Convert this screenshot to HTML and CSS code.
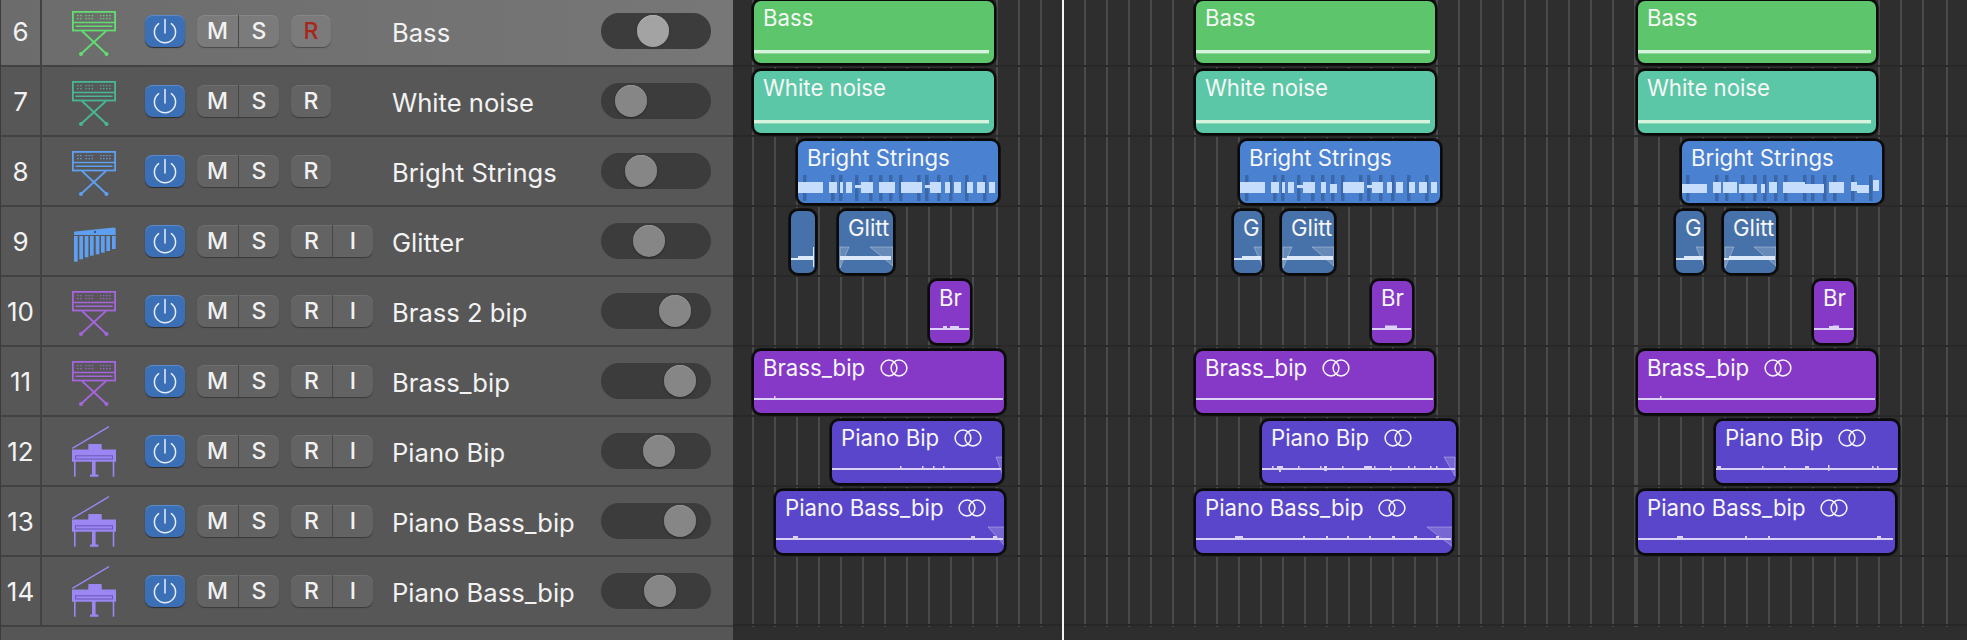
FILE: index.html
```html
<!DOCTYPE html>
<html>
<head>
    <meta charset="UTF-8">
    <title>Tracks</title>
    <link rel="stylesheet" href="styles.css">
</head>

<body>
    <!-- shared icons -->
    <svg class="defs" width="0" height="0">
        <symbol id="icon-keyboard" viewBox="0 -6 44 52">
            <g fill="none" stroke="currentColor">
                <rect x="0.9" y="0.9" width="42.2" height="18.6" stroke-width="1.8"/>
                <path d="M0.8 11.5H43.2" stroke-width="1.6"/>
                <path d="M3.5 15.3H40.5" stroke-width="1.5"/>
                <path d="M10 20L34.5 43M34 20L9 43" stroke-width="1.8"/>
                <path d="M5 4.7H10M13.5 4.7H22M28 4.7H40M5 7.7H10M13.5 7.7H22M28 7.7H40" stroke-width="1.3" stroke-dasharray="1.6 1.4" opacity=".85"/>
            </g>
            <circle cx="9" cy="43" r="2" fill="currentColor"/>
            <circle cx="34.5" cy="43" r="2" fill="currentColor"/>
        </symbol>
        <symbol id="icon-chimes" viewBox="0 -6 44 52">
            <g fill="currentColor">
                <path d="M2 14V11.5Q2 10.7 3 10.6L42 6.4Q43.6 6.3 43.7 8V14Z"/>
                <rect x="2" y="15" width="3.7" height="25.7"/>
                <rect x="7.3" y="15" width="3.7" height="23.3"/>
                <rect x="12.7" y="15" width="3.7" height="21.3"/>
                <rect x="18" y="15" width="3.7" height="19.7"/>
                <rect x="23.7" y="15" width="3.7" height="18.3"/>
                <rect x="29" y="15" width="3.7" height="16.7"/>
                <rect x="34.3" y="15" width="3.7" height="15"/>
                <rect x="40" y="15" width="3.7" height="13"/>
            </g>
            <circle cx="23" cy="11" r="1.2" fill="#3b5b8a"/>
        </symbol>
        <symbol id="icon-piano" viewBox="0 -6 44 52">
            <g fill="currentColor">
                <path d="M16.3 18.5V13.5Q16.3 13 17 13H29Q29.7 13 29.7 13.5V18.5H44V30.7H0V18.5Z"/>
                <rect x="2" y="30" width="1.6" height="15.7"/>
                <rect x="40.7" y="30" width="1.6" height="15.7"/>
                <path d="M20 30H23.6V43.6H26.4V45.8H18V43.6H20Z"/>
            </g>
            <path d="M0.3 17.5L37 -4.3" fill="none" stroke="currentColor" stroke-width="1.4"/>
            <rect x="3.5" y="24.8" width="37" height="3.2" fill="none" stroke="#6a59b8" stroke-width="1"/>
        </symbol>
        <symbol id="icon-power" viewBox="0 0 40 32">
            <path d="M13.6 8.6A10.6 10.6 0 1 0 26.4 8.6M20 4.5V18" fill="none" stroke="currentColor" stroke-width="1.5" stroke-linecap="round"/>
        </symbol>
        <symbol id="icon-loop" viewBox="0 0 28 18">
            <circle cx="9" cy="9" r="7.9" fill="none" stroke="currentColor" stroke-width="1.5"/>
            <circle cx="19" cy="9" r="7.9" fill="none" stroke="currentColor" stroke-width="1.5"/>
        </symbol>
    </svg>

    <div class="page">
        <div class="tracklist">
            <div class="track track-active">
                <div class="track-num">6</div>
                <svg class="track-icon c-green"><use href="#icon-keyboard"/></svg>
                <button class="power"><svg><use href="#icon-power"/></svg></button>
                <div class="btn-group"><span class="btn">M</span><span class="btn">S</span></div>
                <div class="rec-slot"><div class="btn-group"><span class="btn rec-on">R</span></div></div>
                <div class="track-name">Bass</div>
                <div class="fader"><span class="knob" style="margin-left:36px"></span></div>
            </div>
            <div class="track">
                <div class="track-num">7</div>
                <svg class="track-icon c-teal"><use href="#icon-keyboard"/></svg>
                <button class="power"><svg><use href="#icon-power"/></svg></button>
                <div class="btn-group"><span class="btn">M</span><span class="btn">S</span></div>
                <div class="rec-slot"><div class="btn-group"><span class="btn">R</span></div></div>
                <div class="track-name">White noise</div>
                <div class="fader"><span class="knob" style="margin-left:14px"></span></div>
            </div>
            <div class="track">
                <div class="track-num">8</div>
                <svg class="track-icon c-blue"><use href="#icon-keyboard"/></svg>
                <button class="power"><svg><use href="#icon-power"/></svg></button>
                <div class="btn-group"><span class="btn">M</span><span class="btn">S</span></div>
                <div class="rec-slot"><div class="btn-group"><span class="btn">R</span></div></div>
                <div class="track-name">Bright Strings</div>
                <div class="fader"><span class="knob" style="margin-left:24px"></span></div>
            </div>
            <div class="track">
                <div class="track-num">9</div>
                <svg class="track-icon c-blue"><use href="#icon-chimes"/></svg>
                <button class="power"><svg><use href="#icon-power"/></svg></button>
                <div class="btn-group"><span class="btn">M</span><span class="btn">S</span></div>
                <div class="rec-slot"><div class="btn-group"><span class="btn">R</span><span class="btn">I</span></div></div>
                <div class="track-name">Glitter</div>
                <div class="fader"><span class="knob" style="margin-left:32px"></span></div>
            </div>
            <div class="track">
                <div class="track-num">10</div>
                <svg class="track-icon c-purple"><use href="#icon-keyboard"/></svg>
                <button class="power"><svg><use href="#icon-power"/></svg></button>
                <div class="btn-group"><span class="btn">M</span><span class="btn">S</span></div>
                <div class="rec-slot"><div class="btn-group"><span class="btn">R</span><span class="btn">I</span></div></div>
                <div class="track-name">Brass 2 bip</div>
                <div class="fader"><span class="knob" style="margin-left:58px"></span></div>
            </div>
            <div class="track">
                <div class="track-num">11</div>
                <svg class="track-icon c-purple"><use href="#icon-keyboard"/></svg>
                <button class="power"><svg><use href="#icon-power"/></svg></button>
                <div class="btn-group"><span class="btn">M</span><span class="btn">S</span></div>
                <div class="rec-slot"><div class="btn-group"><span class="btn">R</span><span class="btn">I</span></div></div>
                <div class="track-name">Brass_bip</div>
                <div class="fader"><span class="knob" style="margin-left:63px"></span></div>
            </div>
            <div class="track">
                <div class="track-num">12</div>
                <svg class="track-icon c-indigo"><use href="#icon-piano"/></svg>
                <button class="power"><svg><use href="#icon-power"/></svg></button>
                <div class="btn-group"><span class="btn">M</span><span class="btn">S</span></div>
                <div class="rec-slot"><div class="btn-group"><span class="btn">R</span><span class="btn">I</span></div></div>
                <div class="track-name">Piano Bip</div>
                <div class="fader"><span class="knob" style="margin-left:42px"></span></div>
            </div>
            <div class="track">
                <div class="track-num">13</div>
                <svg class="track-icon c-indigo"><use href="#icon-piano"/></svg>
                <button class="power"><svg><use href="#icon-power"/></svg></button>
                <div class="btn-group"><span class="btn">M</span><span class="btn">S</span></div>
                <div class="rec-slot"><div class="btn-group"><span class="btn">R</span><span class="btn">I</span></div></div>
                <div class="track-name">Piano Bass_bip</div>
                <div class="fader"><span class="knob" style="margin-left:63px"></span></div>
            </div>
            <div class="track">
                <div class="track-num">14</div>
                <svg class="track-icon c-indigo"><use href="#icon-piano"/></svg>
                <button class="power"><svg><use href="#icon-power"/></svg></button>
                <div class="btn-group"><span class="btn">M</span><span class="btn">S</span></div>
                <div class="rec-slot"><div class="btn-group"><span class="btn">R</span><span class="btn">I</span></div></div>
                <div class="track-name">Piano Bass_bip</div>
                <div class="fader"><span class="knob" style="margin-left:43px"></span></div>
            </div>
        </div>

        <div class="arrange">
            <div class="lanes">
                <div class="lane">
                    <div class="region r-green" style="left:19px;width:244px"><div class="region-name">Bass</div><svg class="notes"><rect class="n-line" x="-1" y="15" width="236" height="3.4"/></svg></div>
                    <div class="region r-green" style="left:461px;width:243px"><div class="region-name">Bass</div><svg class="notes"><rect class="n-line" x="-1" y="15" width="235" height="3.4"/></svg></div>
                    <div class="region r-green" style="left:903px;width:242px"><div class="region-name">Bass</div><svg class="notes"><rect class="n-line" x="-1" y="15" width="234" height="3.4"/></svg></div>
                </div>
                <div class="lane">
                    <div class="region r-teal" style="left:19px;width:244px"><div class="region-name">White noise</div><svg class="notes"><rect class="n-line" x="-1" y="15" width="236" height="3.4"/></svg></div>
                    <div class="region r-teal" style="left:461px;width:243px"><div class="region-name">White noise</div><svg class="notes"><rect class="n-line" x="-1" y="15" width="235" height="3.4"/></svg></div>
                    <div class="region r-teal" style="left:903px;width:242px"><div class="region-name">White noise</div><svg class="notes"><rect class="n-line" x="-1" y="15" width="234" height="3.4"/></svg></div>
                </div>
                <div class="lane">
                    <div class="region r-blue" style="left:63px;width:204px"><div class="region-name">Bright Strings</div>
                        <svg class="notes">
                            <g class="n-tick"><rect x="5" y="0" width="3.5" height="26"/><rect x="33" y="0" width="3.5" height="26"/><rect x="41" y="0" width="3.5" height="26"/><rect x="57" y="0" width="3.5" height="26"/><rect x="71" y="0" width="3.5" height="26"/><rect x="81" y="0" width="3.5" height="26"/><rect x="91" y="0" width="3.5" height="26"/><rect x="101" y="0" width="3.5" height="26"/><rect x="119" y="0" width="3.5" height="26"/><rect x="127" y="0" width="3.5" height="26"/><rect x="139" y="0" width="3.5" height="26"/><rect x="151" y="0" width="3.5" height="26"/><rect x="167" y="0" width="3.5" height="26"/><rect x="185" y="0" width="3.5" height="26"/></g>
                            <g class="n-block"><rect x="-1" y="7" width="26" height="11"/><rect x="31" y="7" width="8" height="11"/><rect x="42" y="7" width="3" height="11"/><rect x="48" y="7" width="6" height="11"/><rect x="57" y="10" width="6" height="3"/><rect x="63" y="7" width="12" height="11"/><rect x="81" y="7" width="16" height="11"/><rect x="103" y="7" width="21" height="11"/><rect x="127" y="10" width="5" height="3"/><rect x="132" y="7" width="11" height="11"/><rect x="147" y="7" width="5" height="11"/><rect x="156" y="7" width="7" height="11"/><rect x="169" y="7" width="6" height="11"/><rect x="179" y="7" width="8" height="11"/><rect x="191" y="7" width="6" height="11"/></g>
                        </svg>
                    </div>
                    <div class="region r-blue" style="left:505px;width:204px"><div class="region-name">Bright Strings</div>
                        <svg class="notes">
                            <g class="n-tick"><rect x="5" y="0" width="3.5" height="26"/><rect x="33" y="0" width="3.5" height="26"/><rect x="41" y="0" width="3.5" height="26"/><rect x="57" y="0" width="3.5" height="26"/><rect x="71" y="0" width="3.5" height="26"/><rect x="81" y="0" width="3.5" height="26"/><rect x="91" y="0" width="3.5" height="26"/><rect x="101" y="0" width="3.5" height="26"/><rect x="119" y="0" width="3.5" height="26"/><rect x="127" y="0" width="3.5" height="26"/><rect x="139" y="0" width="3.5" height="26"/><rect x="151" y="0" width="3.5" height="26"/><rect x="167" y="0" width="3.5" height="26"/><rect x="185" y="0" width="3.5" height="26"/></g>
                            <g class="n-block"><rect x="-1" y="7" width="26" height="11"/><rect x="31" y="7" width="8" height="11"/><rect x="42" y="7" width="3" height="11"/><rect x="48" y="7" width="6" height="11"/><rect x="57" y="10" width="6" height="3"/><rect x="63" y="7" width="12" height="11"/><rect x="81" y="7" width="5" height="11"/><rect x="90" y="9" width="7" height="9"/><rect x="103" y="7" width="21" height="11"/><rect x="127" y="10" width="5" height="3"/><rect x="132" y="7" width="11" height="11"/><rect x="147" y="7" width="5" height="11"/><rect x="156" y="7" width="7" height="11"/><rect x="169" y="7" width="6" height="11"/><rect x="179" y="7" width="8" height="11"/><rect x="191" y="7" width="6" height="11"/></g>
                        </svg>
                    </div>
                    <div class="region r-blue" style="left:947px;width:204px"><div class="region-name">Bright Strings</div>
                        <svg class="notes">
                            <g class="n-tick"><rect x="4" y="0" width="3.5" height="26"/><rect x="33" y="0" width="3.5" height="26"/><rect x="43" y="0" width="3.5" height="26"/><rect x="59" y="0" width="3.5" height="26"/><rect x="71" y="0" width="3.5" height="26"/><rect x="81" y="0" width="3.5" height="26"/><rect x="92" y="0" width="3.5" height="26"/><rect x="102" y="0" width="3.5" height="26"/><rect x="121" y="0" width="3.5" height="26"/><rect x="129" y="0" width="3.5" height="26"/><rect x="141" y="0" width="3.5" height="26"/><rect x="151" y="0" width="3.5" height="26"/><rect x="169" y="0" width="3.5" height="26"/><rect x="187" y="0" width="3.5" height="26"/></g>
                            <g class="n-block"><rect x="-1" y="9" width="26" height="9"/><rect x="31" y="7" width="8" height="11"/><rect x="41" y="7" width="14" height="11"/><rect x="57" y="9" width="18" height="9"/><rect x="79" y="9" width="4" height="9"/><rect x="87" y="7" width="8" height="11"/><rect x="101" y="7" width="22" height="11"/><rect x="123" y="9" width="19" height="9"/><rect x="147" y="7" width="15" height="11"/><rect x="169" y="7" width="6" height="9"/><rect x="175" y="10" width="12" height="8"/><rect x="191" y="5" width="6" height="11"/></g>
                        </svg>
                    </div>
                </div>
                <div class="lane">
                    <div class="region r-steel" style="left:56px;width:28px"><div class="region-name">&nbsp;</div><svg class="notes"><rect class="n-line" x="-1" y="13" width="8" height="2"/><rect class="n-line" x="7" y="11" width="15" height="4"/><rect class="n-line" x="22" y="2" width="1" height="20"/></svg></div>
                    <div class="region r-steel" style="left:104px;width:58px"><div class="region-name">Glitt</div><svg class="notes"><path class="n-fade" d="M1 2H10L1 23Z"/><path class="n-fade" d="M31 2H54V21Z"/><rect class="n-line" x="1" y="11" width="51" height="4"/></svg></div>
                    <div class="region r-steel" style="left:499px;width:32px"><div class="region-name">G</div><svg class="notes"><path class="n-fade" d="M20 2H29V22Z"/><rect class="n-line" x="-1" y="13" width="9" height="2"/><rect class="n-line" x="8" y="11" width="19" height="4"/></svg></div>
                    <div class="region r-steel" style="left:547px;width:56px"><div class="region-name">Glitt</div><svg class="notes"><path class="n-fade" d="M1 2H10L1 23Z"/><path class="n-fade" d="M30 2H52V21Z"/><rect class="n-line" x="0" y="13" width="5" height="2"/><rect class="n-line" x="5" y="11" width="46" height="4"/></svg></div>
                    <div class="region r-steel" style="left:941px;width:32px"><div class="region-name">G</div><svg class="notes"><path class="n-fade" d="M20 2H29V22Z"/><rect class="n-line" x="-1" y="13" width="9" height="2"/><rect class="n-line" x="8" y="11" width="19" height="4"/></svg></div>
                    <div class="region r-steel" style="left:989px;width:56px"><div class="region-name">Glitt</div><svg class="notes"><path class="n-fade" d="M1 2H10L1 23Z"/><path class="n-fade" d="M30 2H52V21Z"/><rect class="n-line" x="0" y="13" width="5" height="2"/><rect class="n-line" x="5" y="11" width="46" height="4"/></svg></div>
                </div>
                <div class="lane">
                    <div class="region r-purple" style="left:195px;width:44px"><div class="region-name">Br</div><svg class="notes"><rect class="n-thin" x="-1" y="13" width="40" height="2"/><rect class="n-thin" x="13" y="11" width="4" height="2"/><rect class="n-thin" x="20" y="11" width="9" height="2"/></svg></div>
                    <div class="region r-purple" style="left:637px;width:44px"><div class="region-name">Br</div><svg class="notes"><rect class="n-thin" x="-1" y="13" width="40" height="2"/><rect class="n-thin" x="13" y="10.5" width="12" height="3"/></svg></div>
                    <div class="region r-purple" style="left:1079px;width:44px"><div class="region-name">Br</div><svg class="notes"><rect class="n-thin" x="-1" y="13" width="40" height="2"/><rect class="n-thin" x="15" y="11" width="4" height="2"/><rect class="n-thin" x="19" y="10.5" width="6" height="3"/></svg></div>
                </div>
                <div class="lane">
                    <div class="region r-purple" style="left:19px;width:254px"><div class="region-name">Brass_bip<svg class="loop"><use href="#icon-loop"/></svg></div><svg class="notes"><rect class="n-thin" x="-1" y="13" width="250" height="2"/><rect class="n-thin" x="20" y="11" width="1.5" height="2"/></svg></div>
                    <div class="region r-purple" style="left:461px;width:242px"><div class="region-name">Brass_bip<svg class="loop"><use href="#icon-loop"/></svg></div><svg class="notes"><rect class="n-thin" x="-1" y="13" width="238" height="2"/></svg></div>
                    <div class="region r-purple" style="left:903px;width:242px"><div class="region-name">Brass_bip<svg class="loop"><use href="#icon-loop"/></svg></div><svg class="notes"><rect class="n-thin" x="-1" y="13" width="238" height="2"/><rect class="n-thin" x="22" y="11" width="1.5" height="2"/></svg></div>
                </div>
                <div class="lane">
                    <div class="region r-indigo" style="left:97px;width:174px"><div class="region-name">Piano Bip<svg class="loop"><use href="#icon-loop"/></svg></div><svg class="notes"><path class="n-fade" d="M164 2H171V21Z"/><rect class="n-thin" x="-1" y="13" width="170" height="2"/><rect class="n-thin" x="68" y="11" width="1.5" height="2"/><rect class="n-thin" x="90" y="11" width="1.5" height="2"/><rect class="n-thin" x="101" y="11" width="1.5" height="2"/><rect class="n-thin" x="111" y="11" width="1.5" height="2"/></svg></div>
                    <div class="region r-indigo" style="left:527px;width:198px"><div class="region-name">Piano Bip<svg class="loop"><use href="#icon-loop"/></svg></div><svg class="notes"><path class="n-fade" d="M182 2H193V21Z"/><rect class="n-thin" x="-1" y="13" width="194" height="2"/><rect class="n-thin" x="10" y="11" width="1.5" height="2"/><rect class="n-thin" x="15" y="11" width="6" height="2"/><rect class="n-thin" x="17" y="15" width="2" height="2"/><rect class="n-thin" x="36" y="11" width="1.5" height="2"/><rect class="n-thin" x="58" y="11" width="1.5" height="2"/><rect class="n-thin" x="62" y="11" width="3" height="5"/><rect class="n-thin" x="80" y="11" width="1.5" height="2"/><rect class="n-thin" x="102" y="11" width="8" height="2"/><rect class="n-thin" x="112" y="11" width="1.5" height="2"/><rect class="n-thin" x="128" y="11" width="1.5" height="5"/><rect class="n-thin" x="146" y="11" width="1.5" height="2"/><rect class="n-thin" x="152" y="11" width="1.5" height="2"/><rect class="n-thin" x="168" y="11" width="1.5" height="2"/><rect class="n-thin" x="174" y="11" width="1.5" height="2"/></svg></div>
                    <div class="region r-indigo" style="left:981px;width:186px"><div class="region-name">Piano Bip<svg class="loop"><use href="#icon-loop"/></svg></div><svg class="notes"><rect class="n-thin" x="0" y="13" width="181" height="2"/><rect class="n-thin" x="1" y="11" width="4" height="2"/><rect class="n-thin" x="46" y="11" width="1.5" height="2"/><rect class="n-thin" x="68" y="11" width="1.5" height="2"/><rect class="n-thin" x="89" y="11" width="4" height="2"/><rect class="n-thin" x="112" y="10" width="1.5" height="6"/><rect class="n-thin" x="156" y="11" width="1.5" height="2"/><rect class="n-thin" x="161" y="11" width="1.5" height="2"/></svg></div>
                </div>
                <div class="lane">
                    <div class="region r-indigo" style="left:41px;width:232px"><div class="region-name">Piano Bass_bip<svg class="loop"><use href="#icon-loop"/></svg></div><svg class="notes"><path class="n-fade" d="M212 2H229V21Z"/><rect class="n-thin" x="-1" y="13" width="228" height="2"/><rect class="n-thin" x="17" y="11" width="5" height="2"/><rect class="n-thin" x="195" y="11" width="4" height="2"/><rect class="n-thin" x="217" y="11" width="4" height="2"/></svg></div>
                    <div class="region r-indigo" style="left:461px;width:260px"><div class="region-name">Piano Bass_bip<svg class="loop"><use href="#icon-loop"/></svg></div><svg class="notes"><path class="n-fade" d="M231 2H257V22Z"/><rect class="n-thin" x="-1" y="13" width="256" height="2"/><rect class="n-thin" x="39" y="11" width="8" height="4"/><rect class="n-thin" x="107" y="11" width="2" height="2"/><rect class="n-thin" x="130" y="11" width="2" height="2"/><rect class="n-thin" x="151" y="11" width="2" height="2"/><rect class="n-thin" x="173" y="11" width="2" height="2"/><rect class="n-thin" x="196" y="11" width="3" height="2"/><rect class="n-thin" x="218" y="11" width="3" height="2"/><rect class="n-thin" x="240" y="11" width="3" height="2"/></svg></div>
                    <div class="region r-indigo" style="left:903px;width:261px"><div class="region-name">Piano Bass_bip<svg class="loop"><use href="#icon-loop"/></svg></div><svg class="notes"><rect class="n-thin" x="-1" y="13" width="256" height="2"/><rect class="n-thin" x="39" y="11" width="6" height="4"/><rect class="n-thin" x="107" y="11" width="2" height="2"/><rect class="n-thin" x="130" y="11" width="2" height="2"/><rect class="n-thin" x="239" y="11" width="4" height="2"/></svg></div>
                </div>
                <div class="lane"></div>
            </div>
            <div class="playhead"></div>
        </div>
    </div>
</body>

</html>
```

FILE: styles.css
```css
* {
    box-sizing: border-box;
}

html, body {
    margin: 0;
    height: 100%;
    overflow: hidden;
    background-color: #2e2e2e;
    font-family: Inter, "Liberation Sans", sans-serif;
}

.defs {
    position: absolute;
}

.page {
    display: flex;
    height: 640px;
}

/* Track headers */
.tracklist {
    width: 733px;
    flex: none;
    height: 640px;
    overflow: hidden;
    background-color: #565656;
    border-left: 1px solid #3c3c3c;
}

.track {
    display: flex;
    align-items: center;
    height: 70px;
    color: #f2f2f2;
    background-color: #575757;
    border-bottom: 2px solid #424242;
}

.track:first-child {
    margin-top: -3px;
}

.track-active {
    background: linear-gradient(90deg, #6c6c6c, #777777);
}

.track-num {
    display: flex;
    align-items: center;
    justify-content: center;
    width: 41px;
    height: 100%;
    flex: none;
    padding-top: 1px;
    font-size: 26px;
    border-right: 2px solid #424242;
}

.track-icon {
    width: 44px;
    height: 52px;
    margin-left: 30px;
    flex: none;
}

.c-green { color: #62dd72; }
.c-teal { color: #47b796; }
.c-blue { color: #5f9ff0; }
.c-purple { color: #a565dc; }
.c-indigo { color: #9b86f2; }

.power {
    width: 40px;
    height: 32px;
    margin-left: 29px;
    padding: 0;
    flex: none;
    color: #e8eef8;
    background-color: #3b6fb6;
    border: none;
    border-radius: 8px;
    box-shadow: inset 0 1px 0 #5b8bcb, 0 1px 1px #2e2e2e;
}

.power svg {
    display: block;
    width: 40px;
    height: 32px;
}

.btn-group {
    display: flex;
    flex: none;
    height: 32px;
    border-radius: 8px;
    background-color: #636363;
    box-shadow: inset 0 1px 0 #6f6f6f, 0 1px 1px #3a3a3a;
    overflow: hidden;
}

.track > .btn-group {
    margin-left: 12px;
}

.track-active .btn-group {
    background-color: #7b7b7b;
    box-shadow: inset 0 1px 0 #878787, 0 1px 1px #4a4a4a;
}

.btn {
    display: flex;
    align-items: center;
    justify-content: center;
    width: 41px;
    font-size: 23px;
    font-weight: 500;
    color: #f2f2f2;
}

.btn + .btn {
    border-left: 1px solid #474747;
}

.rec-on {
    color: #a9261b;
}

.rec-slot {
    width: 82px;
    margin-left: 12px;
    flex: none;
}

.rec-slot .btn-group {
    display: inline-flex;
    vertical-align: top;
}

.rec-slot .btn:only-child {
    width: 40px;
}

.track-name {
    flex: 1;
    margin-left: 19px;
    padding-top: 2px;
    font-size: 25.6px;
    white-space: nowrap;
}

.fader {
    display: flex;
    align-items: center;
    flex: none;
    width: 110px;
    height: 36px;
    margin-right: 22px;
    background-color: #3c3c3c;
    border-radius: 18px;
}

.knob {
    display: block;
    width: 32px;
    height: 32px;
    border-radius: 50%;
    background-color: #868686;
    box-shadow: inset 0 1px 0 #949494, 0 1px 2px #262626;
}

.track-active .knob {
    background-color: #a3a3a3;
    box-shadow: inset 0 1px 0 #b0b0b0, 0 1px 2px #333333;
}

/* Arrange area */
.arrange {
    position: relative;
    flex: 1;
    height: 640px;
    overflow: hidden;
}

.lanes {
    margin-top: -3px;
    height: 630px;
    background-image:
        repeating-linear-gradient(90deg, #4a4a4a 0 2px, transparent 2px 22px),
        repeating-linear-gradient(90deg, #4a4a4a 0 2px, transparent 2px 22px),
        repeating-linear-gradient(90deg, #4a4a4a 0 2px, transparent 2px 22px),
        repeating-linear-gradient(90deg, #4a4a4a 0 2px, transparent 2px 22px);
    background-size: 224px 100%, 640px 100%, 288px 100%, 24px 100%;
    background-position: 19px 0, 263px 0, 903px 0, 1213px 0;
    background-repeat: no-repeat;
}

.lane {
    position: relative;
    height: 70px;
    border-bottom: 2px solid #282828;
}

.lane:last-child {
    height: 69px;
}

.playhead {
    position: absolute;
    top: 0;
    bottom: 0;
    left: 329px;
    width: 2px;
    background-color: #f4f4f4;
}

/* Regions */
.region {
    position: absolute;
    top: 2px;
    height: 66px;
    overflow: hidden;
    color: #f6f6f6;
    border: 2px solid #0a0a0a;
    border-radius: 9px;
    box-shadow: 0 0 0 1px rgba(0, 0, 0, 0.55);
}

.r-green { background-color: #5dc56b; }
.r-teal { background-color: #5bc7a7; }
.r-blue { background-color: #4a81d0; }
.r-steel { background-color: #4771a9; }
.r-purple { background-color: #8639c7; }
.r-indigo { background-color: #5946ca; }

.region-name {
    display: flex;
    align-items: center;
    gap: 15px;
    height: 33px;
    margin-bottom: 1px;
    padding: 0 0 0 9px;
    font-size: 22.2px;
    white-space: nowrap;
}

.loop {
    width: 28px;
    height: 18px;
    flex: none;
}

.notes {
    display: block;
    width: 100%;
    height: 26px;
    overflow: hidden;
}

.n-line { fill: #d6f4dd; }
.r-steel .n-line { fill: #dde8f8; }
.n-thin { fill: #dcd2f6; }
.n-tick { fill: #3a67a8; }
.n-block { fill: #c6ddfb; }
.n-fade { fill: rgba(255, 255, 255, 0.18); stroke: rgba(255, 255, 255, 0.3); }
```
